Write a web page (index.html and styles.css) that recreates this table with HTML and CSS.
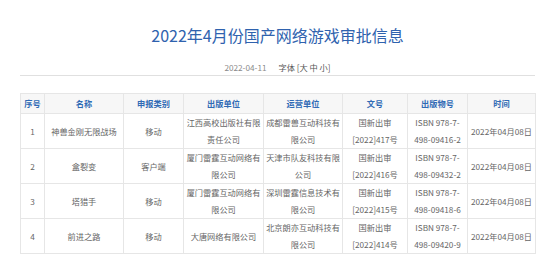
FILE: index.html
```html
<!DOCTYPE html>
<html lang="zh-CN">
<head>
<meta charset="utf-8">
<title>2022年4月份国产网络游戏审批信息</title>
<link rel="stylesheet" href="styles.css">
</head>
<body>
<div class="page">
  <h1 class="title">2022年4月份国产网络游戏审批信息</h1>
  <div class="meta"><span class="date">2022-04-11</span><span class="font-tools">字体 [<span>大</span> <span>中</span> <span>小</span>]</span></div>
  <div class="rule"></div>
  <table class="list">
    <colgroup>
      <col class="c1"><col class="c2"><col class="c3"><col class="c4"><col class="c5"><col class="c6"><col class="c7"><col class="c8">
    </colgroup>
    <thead>
      <tr><th>序号</th><th>名称</th><th>申报类别</th><th>出版单位</th><th>运营单位</th><th>文号</th><th>出版物号</th><th>时间</th></tr>
    </thead>
    <tbody>
      <tr><td>1</td><td>神兽金刚无限战场</td><td>移动</td><td>江西高校出版社有限<br>责任公司</td><td>成都雷兽互动科技有<br>限公司</td><td>国新出审<br>[2022]417号</td><td>ISBN 978-7-<br>498-09416-2</td><td>2022年04月08日</td></tr>
      <tr><td>2</td><td>盒裂变</td><td>客户端</td><td>厦门雷霆互动网络有<br>限公司</td><td>天津市队友科技有限<br>公司</td><td>国新出审<br>[2022]416号</td><td>ISBN 978-7-<br>498-09432-2</td><td>2022年04月08日</td></tr>
      <tr><td>3</td><td>塔猎手</td><td>移动</td><td>厦门雷霆互动网络有<br>限公司</td><td>深圳雷霆信息技术有<br>限公司</td><td>国新出审<br>[2022]415号</td><td>ISBN 978-7-<br>498-09418-6</td><td>2022年04月08日</td></tr>
      <tr><td>4</td><td>前进之路</td><td>移动</td><td>大唐网络有限公司</td><td>北京朗亦互动科技有<br>限公司</td><td>国新出审<br>[2022]414号</td><td>ISBN 978-7-<br>498-09420-9</td><td>2022年04月08日</td></tr>
    </tbody>
  </table>
</div>
</body>
</html>
```
FILE: styles.css
```css
html, body {
  margin: 0;
  padding: 0;
  background: #ffffff;
}
body {
  font-family: "Noto Sans CJK SC", "Noto Sans", sans-serif;
  color: #666666;
}
.page {
  width: 515px;
  margin-left: 20px;
}
.title {
  margin: 25px 0 0;
  font-size: 16px;
  line-height: 20px;
  font-weight: normal;
  text-align: center;
  color: #2f62ae;
}
.meta {
  margin-top: 16px;
  font-size: 8.2px;
  line-height: 12px;
  text-align: center;
  color: #8a8a8a;
}
.date {
  margin-right: 12px;
}
.font-tools {
  color: #555555;
}
.rule {
  margin-top: 2px;
  border-top: 1px solid #e0e0e0;
}
.list {
  margin-top: 17px;
  width: 515px;
  border-collapse: collapse;
  table-layout: fixed;
  font-size: 8.2px;
}
.c1 { width: 24px; }
.c2 { width: 79px; }
.c3 { width: 60px; }
.c4 { width: 80px; }
.c5 { width: 79px; }
.c6 { width: 65px; }
.c7 { width: 60px; }
.c8 { width: 68px; }
.list th,
.list td {
  border: 1px solid #e6e6e6;
  padding: 0;
  text-align: center;
  vertical-align: middle;
  white-space: nowrap;
}
.list th {
  background: #f7f7f7;
  color: #2f6ab5;
  font-weight: bold;
  line-height: 19px;
}
.list td {
  line-height: 17px;
  color: #666666;
}
```
